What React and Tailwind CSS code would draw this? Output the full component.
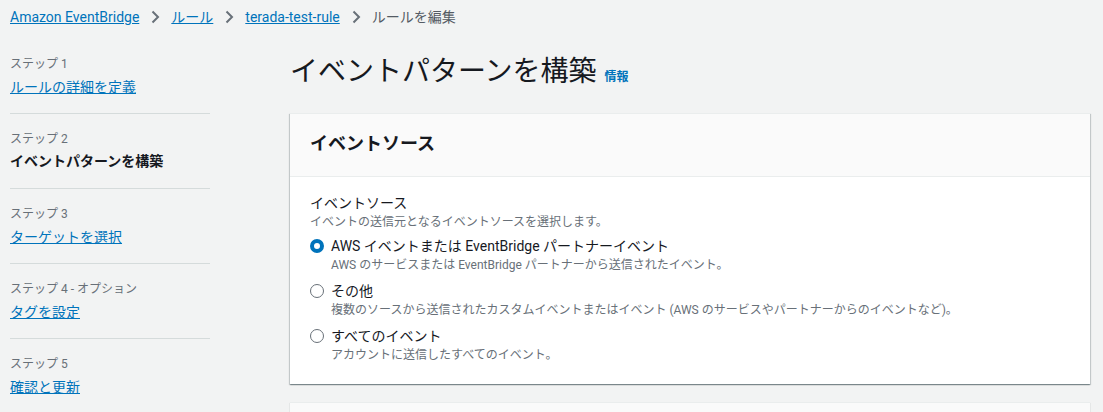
import React, { useState } from 'react'

const font = { fontFamily: 'Roboto, "Noto Sans CJK JP", sans-serif' }

const Chevron = () => (
  <svg width="16" height="16" viewBox="0 0 16 16" className="mx-[8px] text-[#687078]">
    <path d="M5.5 2.5 11 8l-5.5 5.5" fill="none" stroke="currentColor" strokeWidth="2" />
  </svg>
)

const steps = [
  { label: 'ステップ 1', title: 'ルールの詳細を定義', link: true },
  { label: 'ステップ 2', title: 'イベントパターンを構築', link: false },
  { label: 'ステップ 3', title: 'ターゲットを選択', link: true },
  { label: 'ステップ 4 - オプション', title: 'タグを設定', link: true },
  { label: 'ステップ 5', title: '確認と更新', link: true },
]

const options = [
  {
    id: 'aws',
    title: 'AWS イベントまたは EventBridge パートナーイベント',
    desc: 'AWS のサービスまたは EventBridge パートナーから送信されたイベント。',
  },
  {
    id: 'other',
    title: 'その他',
    desc: '複数のソースから送信されたカスタムイベントまたはイベント (AWS のサービスやパートナーからのイベントなど)。',
  },
  {
    id: 'all',
    title: 'すべてのイベント',
    desc: 'アカウントに送信したすべてのイベント。',
  },
]

export default function App() {
  const [source, setSource] = useState('aws')

  return (
    <div className="h-[412px] bg-[#f2f3f3] text-[#16191f] overflow-hidden" style={font}>
      {/* Breadcrumbs */}
      <div className="flex items-center h-[34px] px-[10px] text-[14px]">
        <a href="#" className="text-[#0073bb] underline">Amazon EventBridge</a>
        <Chevron />
        <a href="#" className="text-[#0073bb] underline">ルール</a>
        <Chevron />
        <a href="#" className="text-[#0073bb] underline">terada-test-rule</a>
        <Chevron />
        <span className="text-[#545b64]">ルールを編集</span>
      </div>

      <div className="flex">
        {/* Wizard steps */}
        <nav className="w-[200px] ml-[10px] mt-[17px] shrink-0">
          {steps.map((s, i) => (
            <div
              key={s.label}
              className={`${i === 0 ? 'h-[63px] pt-[3px]' : 'h-[75px] pt-[15px]'} ${i < steps.length - 1 ? 'border-b border-[#d5dbdb]' : ''}`}
            >
              <div className="text-[12px] leading-[21px] text-[#687078]">{s.label}</div>
              {s.link ? (
                <a href="#" className="text-[14px] leading-[22px] text-[#0073bb] underline">{s.title}</a>
              ) : (
                <div className="text-[14px] leading-[22px] font-bold">{s.title}</div>
              )}
            </div>
          ))}
        </nav>

        {/* Main */}
        <main className="ml-[80px] w-[800px] shrink-0">
          <div className="flex items-baseline h-[79px] pt-[20px]">
            <h1 className="text-[28px] leading-[36px] font-normal">イベントパターンを構築</h1>
            <a href="#" className="ml-[8px] text-[12px] font-bold text-[#0073bb]">情報</a>
          </div>

          <section className="bg-white shadow-[0_1px_1px_0_rgba(0,28,36,0.3),1px_1px_1px_0_rgba(0,28,36,0.15),-1px_1px_1px_0_rgba(0,28,36,0.15)] border-t border-[#eaeded]">
            <div className="h-[63px] bg-[#fafafa] border-b border-[#eaeded] px-[20px] pb-[3px] flex items-center">
              <h2 className="text-[18px] font-bold leading-[22px]">イベントソース</h2>
            </div>
            <div className="px-[20px] pt-[16px] pb-[19px]">
              <div className="text-[14px] leading-[20px]">イベントソース</div>
              <div className="text-[12px] leading-[18px] text-[#687078]">イベントの送信元となるイベントソースを選択します。</div>
              <div className="mt-[5px] flex flex-col gap-[6px]">
                {options.map((o) => {
                  const on = source === o.id
                  return (
                    <label key={o.id} className="flex cursor-pointer" onClick={() => setSource(o.id)}>
                      <span
                        className={`mt-[3px] w-[14px] h-[14px] rounded-full shrink-0 bg-white ${on ? 'border-[4px] border-[#0073bb]' : 'border-[1px] border-[#687078]'}`}
                      />
                      <span className="ml-[7px]">
                        <span className="block text-[14px] leading-[20px]">{o.title}</span>
                        <span className="block text-[12px] leading-[19px] text-[#687078]">{o.desc}</span>
                      </span>
                    </label>
                  )
                })}
              </div>
            </div>
          </section>

          <section className="mt-[18px] h-[40px] bg-[#fafafa] border-t border-[#eaeded] shadow-[0_1px_1px_0_rgba(0,28,36,0.3)]" />
        </main>
      </div>
    </div>
  )
}
